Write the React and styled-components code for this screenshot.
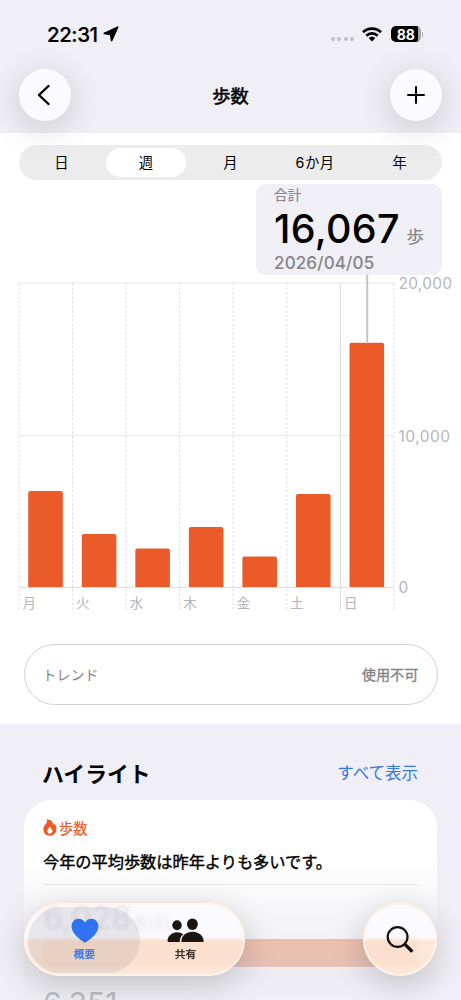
import styled, { createGlobalStyle } from "styled-components";

const week = [
  { day: "月", steps: 6316 },
  { day: "火", steps: 3487 },
  { day: "水", steps: 2533 },
  { day: "木", steps: 3947 },
  { day: "金", steps: 2007 },
  { day: "土", steps: 6118 },
  { day: "日", steps: 16067 },
];

const ranges = ["日", "週", "月", "6か月", "年"];

const LocationIcon = () => (
  <svg width="16" height="16" viewBox="0 0 16 16">
    <path
      d="M14.6 1.2 L8.6 14.6 L7.6 8.4 L1.2 7.4 Z"
      fill="#000"
      stroke="#000"
      strokeWidth="1.6"
      strokeLinejoin="round"
    />
  </svg>
);

const WifiIcon = () => (
  <svg width="20" height="15" viewBox="0 0 20 15">
    <g fill="none" stroke="#000" strokeWidth="2.6">
      <path d="M1 5.2 A13 13 0 0 1 19 5.2" />
      <path d="M4.3 8.7 A8.2 8.2 0 0 1 15.7 8.7" />
    </g>
    <path d="M6.7 11 A4.8 4.8 0 0 1 13.3 11 L10 14.4 Z" fill="#000" />
  </svg>
);

const FlameIcon = () => (
  <svg width="14" height="17" viewBox="0 0 14 17">
    <path
      fillRule="evenodd"
      fill="#eb5a28"
      d="M3.2 0.2 C8.2 0.3 10.4 3 10.2 6 C10.8 5.6 11.1 5 11.1 4.2 C12.5 5.6 13.4 7.4 13.4 9.7 C13.4 13.7 10.8 16.8 6.9 16.8 C3 16.8 0.4 14.2 0.4 10.6 C0.4 8.2 1.4 6.7 2.7 5.1 C4.2 3.4 4.6 1.6 3.2 0.2 Z M6.6 7.2 C6.6 8.8 4.4 9.7 4.4 12 C4.4 13.6 5.4 14.7 6.9 14.7 C8.4 14.7 9.5 13.6 9.5 12.1 C9.5 11.2 9.2 10.5 8.7 10 C8.5 10.4 8.3 10.5 8 10.6 C8.2 9.2 7.7 8 6.6 7.2 Z"
    />
  </svg>
);

const HeartIcon = () => (
  <svg width="28" height="25" viewBox="0 0 28 25">
    <path
      fill="#2f73f0"
      d="M14 24.5 C13.2 24.5 12.3 23.8 11.2 23 C5 18.4 0.6 13.7 0.6 8.3 C0.6 3.9 3.6 0.7 7.6 0.7 C10.4 0.7 12.6 2.1 14 4.5 C15.4 2.1 17.6 0.7 20.4 0.7 C24.4 0.7 27.4 3.9 27.4 8.3 C27.4 13.7 23 18.4 16.8 23 C15.7 23.8 14.8 24.5 14 24.5 Z"
    />
  </svg>
);

const PeopleIcon = () => (
  <svg width="37" height="25" viewBox="0 0 37 25">
    <g fill="#1c1410">
      <ellipse cx="10" cy="7.2" rx="4.7" ry="5" />
      <ellipse cx="25.4" cy="6.2" rx="5.4" ry="5.8" />
      <path d="M1.8 24 C0.8 24 0.4 23.4 0.5 22.5 C1 18 4.8 14.2 9.9 14.2 C12.4 14.2 14.7 14.9 16.3 16.3 C14.2 18 12.9 20.2 12.7 22.9 C12.7 23.3 12.7 23.7 12.9 24 Z" />
      <path d="M16 24 C14.7 24 14.2 23.4 14.3 22.4 C15 17.7 19.4 13.8 25.5 13.8 C31.5 13.8 35.9 17.7 36.7 22.4 C36.8 23.4 36.2 24 35 24 Z" />
    </g>
  </svg>
);

const SearchIcon = () => (
  <svg width="28" height="28" viewBox="0 0 28 28" fill="none" stroke="#17100c" strokeLinecap="round">
    <circle cx="11.6" cy="11" r="9.9" strokeWidth="2.2" />
    <path d="M19.2 18.6 L25.4 24.7" strokeWidth="3.3" />
  </svg>
);

// Plot area runs from y=8 (20,000) down to y=312 (0), the marker starts at the callout
const StepChart = () => {
  const left = 19;
  const col = 53.55;
  const base = 312;
  const lines = [...week.keys(), 7];
  return (
    <ChartSvg width="461" height="340" viewBox="0 0 461 340">
      <g stroke="#e8e8ea" strokeWidth="1">
        <path d="M19 8H394M19 160.5H394" />
        <path d="M19 312.5H394" stroke="#dfdfe1" />
        {lines.map((i) => (
          <path
            key={i}
            d={`M${left + i * col} 8V336`}
            stroke={i === 6 ? "#dadade" : "#dddde0"}
            strokeDasharray={i === 6 ? undefined : "2.5 2"}
          />
        ))}
      </g>
      <path d="M367.2 0V67" stroke="#c3c3c8" strokeWidth="2" />
      {week.map(({ day, steps }, i) => {
        const x = left + i * col;
        const h = (steps / 20000) * 304;
        return (
          <g key={day}>
            <path
              fill="#eb5a29"
              d={`M${x + 9.2} ${base}v${2 - h}q0 -2 2 -2h30.6q2 0 2 2V${base}z`}
            />
            <DayLabel x={x + 3.6} y="333">{day}</DayLabel>
          </g>
        );
      })}
      <text x="398.5" y="14" textLength="53.5">20,000</text>
      <text x="398.5" y="166.5" textLength="51.5">10,000</text>
      <text x="398.5" y="318">0</text>
    </ChartSvg>
  );
};

function App() {
  return (
    <Screen>
      <GlobalStyle />
      <Header>
        <StatusBar>
          <Clock>22:31 <LocationIcon /></Clock>
          <StatusIcons>
            <Dots><i /><i /><i /><i /></Dots>
            <WifiIcon />
            <Battery><span>88</span></Battery>
          </StatusIcons>
        </StatusBar>
        <NavBar>
          <RoundButton aria-label="戻る">
            <svg width="16" height="22" viewBox="0 0 16 22" fill="none" stroke="#000" strokeWidth="2.4" strokeLinecap="round" strokeLinejoin="round">
              <path d="M11.5 2 L2 11 L11.5 20" />
            </svg>
          </RoundButton>
          <Title>歩数</Title>
          <RoundButton aria-label="追加">
            <svg width="18" height="18" viewBox="0 0 18 18" stroke="#000" strokeWidth="2" strokeLinecap="round">
              <path d="M9 1V17M1 9H17" />
            </svg>
          </RoundButton>
        </NavBar>
      </Header>

      <Summary>
        <Segments>
          {ranges.map((r) => (
            <Segment key={r} $active={r === "週"}>{r}</Segment>
          ))}
        </Segments>
        <Callout>
          <CalloutLabel>合計</CalloutLabel>
          <CalloutValue>16,067<small>歩</small></CalloutValue>
          <CalloutDate>2026/04/05</CalloutDate>
        </Callout>
        <StepChart />
        <Trend>
          <span>トレンド</span>
          <b>使用不可</b>
        </Trend>
      </Summary>

      <Highlights>
        <HighlightsHead>
          <h2>ハイライト</h2>
          <a>すべて表示</a>
        </HighlightsHead>
        <Card>
          <CardKind><FlameIcon />歩数</CardKind>
          <CardText>今年の平均歩数は昨年よりも多いです。</CardText>
          <Average>6,028<small>歩/日</small></Average>
          <YearBar />
          <LastYear>6,351</LastYear>
        </Card>
      </Highlights>

      <BottomBar>
        <Tabs>
          <Tab $active><HeartIcon />概要</Tab>
          <Tab><PeopleIcon />共有</Tab>
        </Tabs>
        <SearchButton aria-label="検索"><SearchIcon /></SearchButton>
      </BottomBar>
    </Screen>
  );
}

const GlobalStyle = createGlobalStyle`
  * {
    box-sizing: border-box;
  }
  body {
    margin: 0;
    font-family: Inter, "Noto Sans CJK JP", sans-serif;
    color: #000;
  }
  button {
    border: 0;
    padding: 0;
    font: inherit;
  }
`;

const Screen = styled.div`
  position: relative;
  width: 461px;
  height: 1000px;
  overflow: hidden;
  background: #fff;
`;

const Header = styled.header`
  height: 133px;
  background: #f0eff5;
`;

const StatusBar = styled.div`
  display: flex;
  align-items: center;
  justify-content: space-between;
  height: 69px;
  padding: 0 38px 1px 47px;
`;

const Clock = styled.div`
  display: flex;
  align-items: center;
  gap: 5px;
  font-size: 20.5px;
  font-weight: 500;
  letter-spacing: -0.45px;
  -webkit-text-stroke: 0.2px;
`;

const StatusIcons = styled.div`
  display: flex;
  align-items: center;
`;

const Dots = styled.div`
  display: flex;
  gap: 2.3px;
  margin: 10px 8px 0 0;
  i {
    width: 4px;
    height: 4px;
    border-radius: 50%;
    background: #bfbfc4;
  }
`;

const Battery = styled.div`
  display: flex;
  align-items: center;
  margin-left: 9px;
  span {
    width: 29.5px;
    height: 16.5px;
    border-radius: 5px;
    background: linear-gradient(to right, #000 26.5px, #a5a5aa 26.5px);
    color: #fff;
    font-size: 14px;
    font-weight: 700;
    line-height: 17px;
    text-align: center;
  }
  &::after {
    content: "";
    width: 1.5px;
    height: 5px;
    margin-left: 1px;
    border-radius: 0 2px 2px 0;
    background: #a5a5aa;
  }
`;

const NavBar = styled.div`
  display: flex;
  align-items: center;
  justify-content: space-between;
  padding: 0 19px;
`;

const RoundButton = styled.button`
  position: relative;
  z-index: 1;
  display: flex;
  align-items: center;
  justify-content: center;
  width: 52px;
  height: 52px;
  border-radius: 50%;
  background: #fbfaff;
  box-shadow: 0 7px 34px rgba(0, 0, 0, 0.17);
`;

const Title = styled.h1`
  margin: 2px 0 0;
  font-size: 18.3px;
  line-height: 28px;
  font-weight: 400;
  -webkit-text-stroke: 0.5px;
`;

const Summary = styled.section`
  display: flex;
  flex-direction: column;
  height: 591px;
  padding-top: 12px;
`;

const Segments = styled.div`
  display: grid;
  grid-template-columns: repeat(5, 1fr);
  height: 34.5px;
  margin: 0 19px;
  padding: 3px 0;
  flex: none;
  border-radius: 18px;
  background: rgba(0, 0, 0, 0.075);
`;

const Segment = styled.div`
  display: flex;
  align-items: center;
  justify-content: center;
  margin: 0 2.3px;
  padding-bottom: 1.5px;
  border-radius: 15px;
  font-size: 14.3px;
  letter-spacing: ${(p) => (p.children.length > 1 ? "0.5px" : "0")};
  background: ${(p) => (p.$active ? "#fff" : "transparent")};
`;

const Callout = styled.div`
  align-self: flex-end;
  width: 186px;
  height: 91px;
  margin: 4.5px 19px 0 0;
  padding: 2px 18px 0;
  flex: none;
  border-radius: 10px;
  background: #f0eff5;
  color: #848489;
  white-space: nowrap;
`;

const CalloutLabel = styled.div`
  font-size: 13.7px;
  line-height: 19px;
  -webkit-text-stroke: 0.15px;
`;

const CalloutValue = styled.div`
  display: flex;
  align-items: baseline;
  height: 48px;
  line-height: 48px;
  font-size: 39.5px;
  font-weight: 500;
  letter-spacing: 0.35px;
  color: #000;
  small {
    margin-left: 6.5px;
    font-size: 17.5px;
    font-weight: 400;
    letter-spacing: 0;
    color: #848489;
    -webkit-text-stroke: 0.2px;
  }
`;

const CalloutDate = styled.div`
  font-size: 17px;
  font-weight: 500;
  line-height: 21px;
  letter-spacing: 0.15px;
`;

const ChartSvg = styled.svg`
  display: block;
  flex: none;
  margin-top: -0.5px;
  text {
    font-size: 15.5px;
    fill: #b5b5b9;
  }
`;

const DayLabel = styled.text`
  && {
    font-size: 13.5px;
  }
`;

const Trend = styled.div`
  display: flex;
  align-items: center;
  justify-content: space-between;
  height: 61px;
  margin: 29.5px 23.5px 0;
  padding: 0 18px 2px;
  border: 1.5px solid #d1d1d3;
  border-radius: 31px;
  color: #858588;
  font-size: 14px;
  b {
    font-weight: 400;
    font-size: 14.2px;
    -webkit-text-stroke: 0.35px;
  }
`;

const Highlights = styled.section`
  height: 276px;
  padding: 0 24px;
  background: #f0eff5;
`;

const HighlightsHead = styled.div`
  display: flex;
  align-items: center;
  justify-content: space-between;
  height: 75.5px;
  padding: 21px 19px 0 18px;
  h2 {
    margin: 0;
    font-size: 21.8px;
    font-weight: 700;
  }
  a {
    color: #3478f0;
    font-size: 16.5px;
  }
`;

const Card = styled.div`
  height: 230px;
  padding: 15px 19px 0;
  border-radius: 28px;
  background: linear-gradient(#fff 0, #fff 60px, #f7f7f9 105px, #ececf1 175px, #f0eff5 200px);
`;

const CardKind = styled.div`
  display: flex;
  align-items: center;
  gap: 2px;
  height: 25px;
  color: #e85a2a;
  font-size: 14.3px;
  -webkit-text-stroke: 0.2px;
`;

const CardText = styled.div`
  height: 45px;
  border-bottom: 1px solid #e9e9eb;
  font-size: 16.2px;
  -webkit-text-stroke: 0.4px;
  line-height: 45px;
  white-space: nowrap;
`;

const Average = styled.div`
  height: 54px;
  padding-top: 14px;
  color: #8a8a90;
  font-size: 32px;
  font-weight: 500;
  line-height: 38px;
  small {
    font-size: 17px;
    font-weight: 400;
  }
`;

const YearBar = styled.div`
  height: 28px;
  border-radius: 4px;
  background: linear-gradient(#eebfab, #e5c2b8);
`;

const LastYear = styled.div`
  margin-top: 18px;
  color: #bcbcc1;
  font-size: 30px;
  line-height: 36px;
`;

const BottomBar = styled.nav`
  position: absolute;
  left: 24px;
  right: 24px;
  bottom: 24px;
  display: flex;
  justify-content: space-between;
`;

const Glass = `
  height: 73px;
  border: 2px solid #fff3e9;
  background: linear-gradient(rgba(252, 251, 255, 0.8) 33px, rgba(254, 229, 211, 0.85) 36px);
  backdrop-filter: blur(2px);
  box-shadow: 0 8px 34px rgba(0, 0, 0, 0.19);
`;

const Tabs = styled.div`
  ${Glass}
  display: flex;
  width: 221px;
  padding: 1.5px;
  border-radius: 37px;
`;

const Tab = styled.div`
  display: flex;
  flex-direction: column;
  align-items: center;
  gap: 4.5px;
  width: ${(p) => (p.$active ? "112px" : "90px")};
  padding: 11px 0 0 2px;
  border-radius: 33px;
  background: ${(p) => (p.$active ? "rgba(60, 60, 80, 0.1)" : "transparent")};
  color: ${(p) => (p.$active ? "#2f73f0" : "#1c1410")};
  font-size: 10.7px;
  -webkit-text-stroke: 0.25px;
  line-height: 16px;
`;

const SearchButton = styled.button`
  ${Glass}
  display: flex;
  align-items: center;
  justify-content: center;
  width: 74px;
  border-radius: 50%;
`;

export default App;
